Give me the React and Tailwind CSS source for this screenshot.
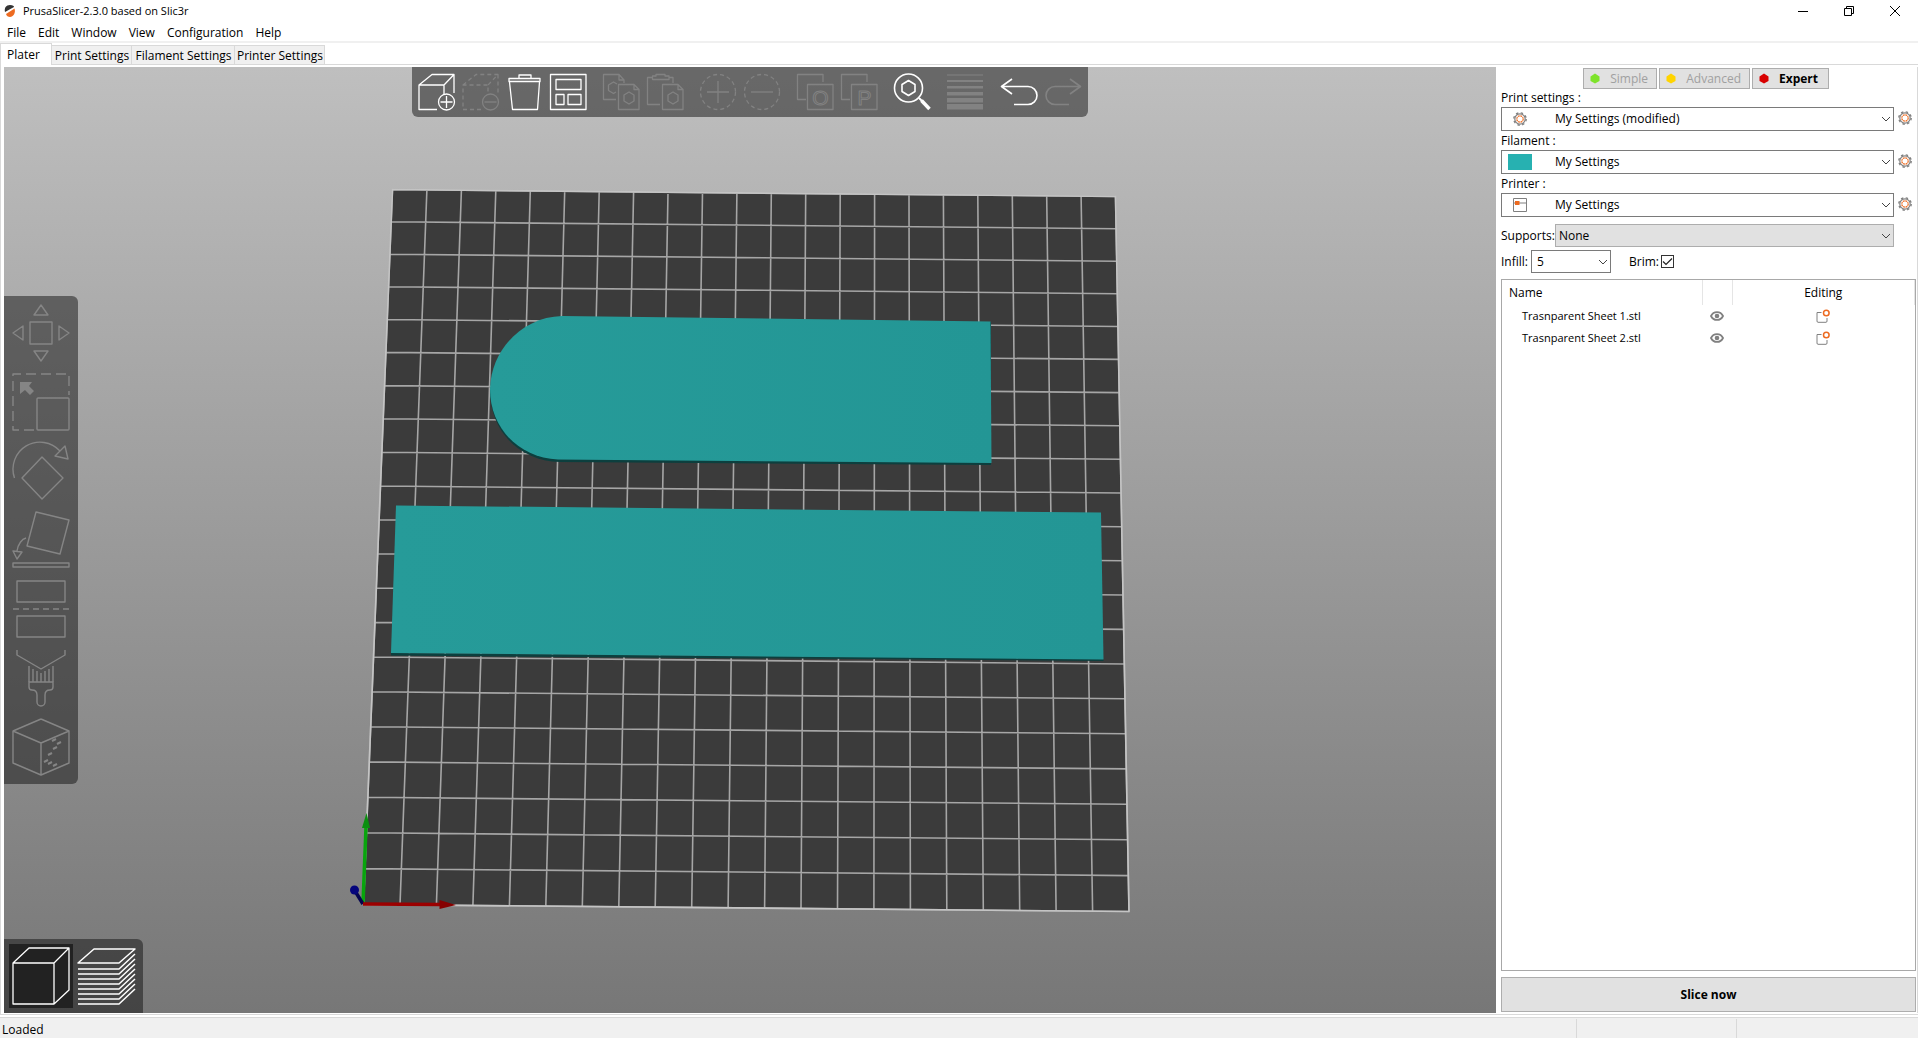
import React from "react";

/* ---------- 3D scene ---------- */

const BED = [
  [392.5, 189.5],
  [1115.5, 196.5],
  [1129, 911.5],
  [363.5, 904.5],
];
const CELLS = 21;

function makeProjection([[x0, y0], [x1, y1], [x2, y2], [x3, y3]]) {
  const dx1 = x1 - x2;
  const dx2 = x3 - x2;
  const dy1 = y1 - y2;
  const dy2 = y3 - y2;
  const sx = x0 - x1 + x2 - x3;
  const sy = y0 - y1 + y2 - y3;
  const den = dx1 * dy2 - dx2 * dy1;
  const g = (sx * dy2 - sy * dx2) / den;
  const h = (dx1 * sy - sx * dy1) / den;
  return (u, v) => {
    const w = g * u + h * v + 1;
    return [
      ((x1 - x0 + g * x1) * u + (x3 - x0 + h * x3) * v + x0) / w,
      ((y1 - y0 + g * y1) * u + (y3 - y0 + h * y3) * v + y0) / w,
    ].map((n) => n.toFixed(1));
  };
}

const project = makeProjection(BED);

const gridPath = Array.from({ length: CELLS + 1 }, (_, i) => {
  const t = i / CELLS;
  return `M${project(t, 0)}L${project(t, 1)}M${project(0, t)}L${project(1, t)}`;
}).join("");

function Scene() {
  return (
    <svg
      className="absolute inset-0 h-full w-full"
      viewBox="4 67 1492 946"
      preserveAspectRatio="xMidYMid slice"
      role="img"
      aria-label="Print bed with two sheets"
    >
      <defs>
        <linearGradient id="sheet" x1="0" x2="1">
          <stop offset="0" stopColor="#269b99" />
          <stop offset="1" stopColor="#239695" />
        </linearGradient>
      </defs>
      <polygon points={BED.join(" ")} fill="#3b3b3b" />
      <path d={gridPath} fill="none" stroke="#a6a6a6" strokeWidth="1.6" />
      <polygon points={BED.join(" ")} fill="none" stroke="#c4c4c4" strokeWidth="1.6" />

      <path
        d="M991 322V465L560 462C519 461 490 431 490 390Z"
        fill="#0c3f3e"
      />
      <path
        d="M562 316L990.500 321.500L991.500 463L558 459.500C519 458 490 428 490 389C491 349 523 317 562 316Z"
        fill="url(#sheet)"
      />
      <polygon points="391,653 1103.500,659 1103.500,661 391,655.500" fill="#0c3f3e" />
      <polygon points="396,505.500 1101,512.500 1103.500,659.500 391,653" fill="url(#sheet)" />

      <path d="M363 904L366 827" stroke="#07a50c" strokeWidth="3.500" />
      <path d="M362 828H370L366.500 813Z" fill="#0a8f0f" />
      <path d="M363 904L355 891" stroke="#050550" strokeWidth="3.500" />
      <circle cx="354.500" cy="890" r="4.500" fill="#05057c" />
      <path d="M363 904L441 904.500" stroke="#9b0000" strokeWidth="3.500" />
      <path d="M439.500 900V909L456 905Z" fill="#860000" />
    </svg>
  );
}

/* ---------- Icons ---------- */

function Icon({ size = "h-9 w-9", box = 36, width = 1.3, children }) {
  return (
    <svg
      className={`${size} shrink-0 overflow-visible`}
      viewBox={`0 0 ${box} ${box}`}
      fill="none"
      stroke="currentColor"
      strokeWidth={width}
      strokeLinejoin="round"
      aria-hidden="true"
    >
      {children}
    </svg>
  );
}

const FrontPage = () => (
  <>
    <path d="M15.500 10.500H31L36 15.500V35.500H15.500ZM31 10.500V15.500H36" />
    <path d="M26 18L31 21V27L26 30L21 27V21Z" />
  </>
);

const StackedSquares = ({ letter }) => (
  <>
    <path d="M9 25.500H.5V.5H26V8" />
    <path d="M10.500 10.500H36V35.500H10.500Z" />
    <text
      x="23.500"
      y="30.500"
      fontSize="21"
      strokeWidth="1"
      textAnchor="middle"
      fontFamily="Liberation Sans, sans-serif"
    >
      {letter}
    </text>
  </>
);

const TOOLBAR = [
  [
    {
      label: "Add",
      on: true,
      art: (
        <>
          <path d="M19 35.500H1V11H26V21M1 11L14 .5H36L26 11M36 .5V19" />
          <circle cx="28.500" cy="28" r="8" />
          <path d="M28.500 22V34M22.500 28H34.500" />
        </>
      ),
    },
    {
      label: "Delete",
      art: (
        <>
          <path d="M19 35.500H1V11H26V21M1 11L14 .5H36L26 11M36 .5V19" strokeDasharray="4 3" />
          <circle cx="28.500" cy="28" r="8" />
          <path d="M22.500 28H34.500" />
        </>
      ),
    },
    {
      label: "Delete all",
      on: true,
      art: (
        <>
          <path d="M3 4.500H34V7.500H3ZM13 4.500V1H25V4.500" />
          <path d="M3.500 8L6.500 35.500H31.500L33.500 8" />
        </>
      ),
    },
    {
      label: "Arrange",
      on: true,
      art: <path d="M.5 .5H36V35.500H.5ZM6 5.500H31V15.500H6ZM6 20.500H14V30.500H6ZM18 20.500H31V30.500H18Z" />,
    },
  ],
  [
    {
      label: "Copy",
      art: (
        <>
          <path d="M13 25.500H.5V.5H16L21 6V9M16 .5V6H21" />
          <path d="M13 18L10.500 19.500L5.500 16.500V11L10.500 8L14 10" />
          <FrontPage />
        </>
      ),
    },
    {
      label: "Paste",
      art: (
        <>
          <path d="M5.500 3.500H.5V30.500H13M22 3.500H26V9M5.500 5.500V2H9V.5H18V2H22V5.500Z" />
          <FrontPage />
        </>
      ),
    },
  ],
  [
    {
      label: "Add instance",
      art: (
        <>
          <circle cx="18" cy="18" r="17.500" strokeDasharray="4 3" />
          <path d="M18 7V29M7 18H29" />
        </>
      ),
    },
    {
      label: "Remove instance",
      art: (
        <>
          <circle cx="18" cy="18" r="17.500" strokeDasharray="4 3" />
          <path d="M7 18H29" />
        </>
      ),
    },
  ],
  [
    { label: "Split to objects", art: <StackedSquares letter="O" /> },
    { label: "Split to parts", art: <StackedSquares letter="P" /> },
  ],
  [
    {
      label: "Search",
      on: true,
      art: (
        <>
          <circle cx="14.500" cy="14" r="14" strokeWidth="1.600" />
          <path d="M14.500 6.500L21 10.500V17.500L14.500 21.500L8 17.500V10.500Z" strokeWidth="1.600" />
          <path d="M25 24L28 27" strokeWidth="2" />
          <path d="M27.500 26.500L35.500 35" strokeWidth="3.500" />
        </>
      ),
    },
  ],
  [
    {
      label: "Variable layer height",
      art: (
        <path
          d="M0 .5H36V1.500H0ZM0 6H36V8H0ZM0 12H36V14.500H0ZM0 18H36V21.500H0ZM0 24H36V28.500H0ZM0 30H36V35.500H0Z"
          fill="currentColor"
          stroke="none"
        />
      ),
    },
  ],
  [
    {
      label: "Undo",
      on: true,
      art: <path d="M12 5L1.500 12.500L12 20M1.500 12.500H28A9 9 0 0 1 28 30.500H14" strokeWidth="1.600" />,
    },
    {
      label: "Redo",
      art: <path d="M26 5L36.500 12.500L26 20M36.500 12.500H11A9 9 0 0 0 11 30.500H25" strokeWidth="1.600" />,
    },
  ],
];

const GIZMOS = [
  {
    label: "Move",
    art: <path d="M29 1L36 11H22ZM29 57L36 47H22ZM1 29L11 22V36ZM57 29L47 22V36ZM18 18H40V40H18Z" />,
  },
  {
    label: "Scale",
    art: (
      <>
        <path d="M22 57H1V1H57V22" strokeDasharray="10 5" />
        <rect x="25" y="25" width="32" height="32" rx="1" />
        <path d="M8 9H20L17 13L22 18L18 22L13 17L8 21Z" fill="currentColor" stroke="none" />
      </>
    ),
  },
  {
    label: "Rotate",
    art: <path d="M2.500 36A27 27 0 0 1 48 9M43 14L53 4L56 17ZM30 15L51 36L30 57L10 36Z" />,
  },
  {
    label: "Place on face",
    art: <path d="M24 1L57 9L48 43L15 35ZM14 27C10 28 6 33 5 40M1 40L10 41L5 48ZM1 52H57V56H1Z" />,
  },
  {
    label: "Cut",
    art: (
      <>
        <path d="M5 1H53V22H5ZM5 36H53V57H5Z" />
        <path d="M1 29H57" strokeDasharray="6 4" />
      </>
    ),
  },
  {
    label: "Paint supports",
    art: (
      <>
        <path d="M5 1V6L29 20L53 6V1" />
        <path d="M17 17V33M21 20V33M25 22V33M29 24V33M33 22V33M37 20V33M41 17V33" />
        <path d="M17 33H41V38Q41 41 38 41Q33 41 33 46V53A4 4 0 0 1 25 53V46Q25 41 20 41Q17 41 17 38Z" />
      </>
    ),
  },
  {
    label: "Seam painting",
    art: (
      <>
        <path d="M29 1L57 13V45L29 57L1 45V13L29 25L57 13M1 13L29 1M29 25V57" />
        <path
          d="M40 23L44 21M45 26L49 24M41 31L45 29M36 37L40 35M32 44L36 42M36 46L40 44M41 48L45 46"
          strokeWidth="2"
        />
      </>
    ),
  },
];

function Gear() {
  return (
    <svg className="h-3.5 w-3.5 shrink-0" viewBox="0 0 14 14" fill="none" aria-hidden="true">
      <circle cx="7" cy="7" r="5.200" stroke="#808080" strokeWidth="1.200" />
      <circle cx="7" cy="7" r="6.200" stroke="#808080" strokeWidth="1.400" strokeDasharray="2.400 2.470" />
      <circle cx="7" cy="7" r="3.200" stroke="#ed6b21" strokeWidth="1.200" strokeDasharray="1.900 .6" />
    </svg>
  );
}

const PrinterIcon = () => (
  <svg className="h-3.5 w-3.5" viewBox="0 0 14 14" fill="none" aria-hidden="true">
    <path d="M.5 .5H13.500V13.500H.5ZM.5 5H13.500" stroke="#808080" />
    <rect x="2" y="3" width="4.500" height="4" fill="#ed6b21" />
  </svg>
);

const Chevron = () => (
  <svg
    className="pointer-events-none absolute top-1/2 right-1 h-2 w-2 -translate-y-1/2"
    viewBox="0 0 8 8"
    fill="none"
    stroke="#444"
    aria-hidden="true"
  >
    <path d="M0 2L4 6L8 2" />
  </svg>
);

const Eye = () => (
  <svg className="h-2.5 w-3.5" viewBox="0 0 14 10" fill="none" stroke="#808080" aria-hidden="true">
    <path d="M1 5C3.500 -.2 10.500 -.2 13 5C10.500 10.200 3.500 10.200 1 5Z" strokeWidth="1.800" />
    <circle cx="7" cy="5" r="2.300" fill="#808080" stroke="none" />
  </svg>
);

const EditIcon = () => (
  <svg className="h-3.5 w-3.5" viewBox="0 0 14 14" fill="none" aria-hidden="true">
    <path d="M5.500 3.500H1V12Q1 13.300 2 13.300H10Q11 13.300 11 12V9" stroke="#808080" />
    <circle cx="10.300" cy="4" r="2.800" stroke="#ed6b21" strokeWidth="1.500" />
  </svg>
);

/* ---------- Window chrome ---------- */

function TitleBar() {
  return (
    <header className="flex h-[22px] items-center pl-1">
      <svg className="h-3 w-3" viewBox="0 0 12 12" aria-hidden="true">
        <path d="M1 7C0 3 2 0 6 0C9 0 10 1 10 2Z" fill="#333" />
        <path d="M2 9L10.500 3.500C12 8 9 12 6 12C4 12 2.500 11 2 9Z" fill="#ed6b21" />
      </svg>
      <h1 className="ml-[7px] flex-1 text-[11px]">PrusaSlicer-2.3.0 based on Slic3r</h1>
      <button aria-label="Minimize" className="flex h-5 w-[46px] items-center justify-center">
        <svg className="h-2.5 w-2.5" viewBox="0 0 10 10" stroke="#000">
          <path d="M0 5.500H10" />
        </svg>
      </button>
      <button aria-label="Restore" className="flex h-5 w-[46px] items-center justify-center">
        <svg className="h-2.5 w-2.5" viewBox="0 0 10 10" fill="none" stroke="#000">
          <path d="M.5 2.500H7.500V9.500H.5ZM2.500 2.500V.5H9.500V7.500H7.500" />
        </svg>
      </button>
      <button aria-label="Close" className="flex h-5 w-[46px] items-center justify-center">
        <svg className="h-2.5 w-2.5" viewBox="0 0 10 10" stroke="#000">
          <path d="M0 0L10 10M10 0L0 10" />
        </svg>
      </button>
    </header>
  );
}

function MenuBar() {
  return (
    <nav className="flex h-[21px] items-center gap-3 border-b-2 border-[#f0f0f0] pt-0.5 pl-[7px]">
      {["File", "Edit", "Window", "View", "Configuration", "Help"].map((item) => (
        <button key={item}>{item}</button>
      ))}
    </nav>
  );
}

const TABS = [
  ["Print Settings", "w-20"],
  ["Filament Settings", "w-[103px]"],
  ["Printer Settings", "w-[90px]"],
];

function Tabs() {
  return (
    <div role="tablist" className="flex h-[22px] items-end">
      <button
        role="tab"
        aria-selected="true"
        className="h-full w-[52px] border-x border-t border-[#d9d9d9] pl-1.5 text-left"
      >
        Plater
      </button>
      {TABS.map(([name, width]) => (
        <button
          key={name}
          role="tab"
          aria-selected="false"
          className={`${width} h-5 border-y border-r border-[#d9d9d9] bg-[#f0f0f0] pt-0.5 pl-px whitespace-nowrap`}
        >
          {name}
        </button>
      ))}
      <div className="h-px flex-1 bg-[#d9d9d9]" />
    </div>
  );
}

/* ---------- Viewport ---------- */

function Viewport() {
  return (
    <main className="relative grid min-w-0 flex-1 grid-rows-[1fr_auto_1fr] overflow-hidden bg-linear-to-b from-[#bfbfbf] to-[#777777]">
      <Scene />
      <div className="relative flex gap-[17px] self-start justify-self-center rounded-b-md bg-[#121212]/50 py-[7px] pr-2 pl-1.5">
        {TOOLBAR.map((group, i) => (
          <div key={i} className="flex gap-2">
            {group.map(({ label, on, art }) => (
              <button
                key={label}
                aria-label={label}
                disabled={!on}
                className={on ? "text-white" : "text-[#828282]"}
              >
                <Icon>{art}</Icon>
              </button>
            ))}
          </div>
        ))}
      </div>
      <div className="relative flex flex-col gap-[11px] justify-self-start rounded-r-md bg-[#121212]/50 p-2 text-[#858585]">
        {GIZMOS.map(({ label, art }) => (
          <button key={label} aria-label={label} disabled>
            <Icon size="h-[58px] w-[58px]" box={58} width={1.4}>
              {art}
            </Icon>
          </button>
        ))}
      </div>
      <div className="relative flex self-end justify-self-start rounded-tr-md bg-[#121212]/50 py-[5px] pr-1.5 pl-[5px] text-white">
        <button aria-label="3D editor view" className="bg-[#222]">
          <Icon size="h-16 w-16" box={64}>
            <path d="M4 19H45V60H4ZM4 19L20 4H60L45 19M60 4V46L45 60" />
          </Icon>
        </button>
        <button aria-label="Preview">
          <Icon size="h-16 w-16" box={64} width={1.5}>
            <path d="M5 19L21 5H62L46 19ZM5 25H46L62 10M5 30H46L62 15M5 35H46L62 20M5 40H46L62 25M5 45H46L62 30M5 50H46L62 35M5 55H46L62 40M5 60H46L62 45" />
          </Icon>
        </button>
      </div>
    </main>
  );
}

/* ---------- Side panel ---------- */

const MODES = [
  ["Simple", "#7ee32b", "w-[74px] pr-2 text-[#a0a0a0]"],
  ["Advanced", "#ffd400", "w-[91px] pr-2 text-[#a0a0a0]"],
  ["Expert", "#d80000", "w-[77px] pr-2.5 font-bold"],
];

function ModeButtons() {
  return (
    <div className="ml-[82px] flex gap-0.5">
      {MODES.map(([name, color, style]) => (
        <button
          key={name}
          className={`${style} flex h-[21px] items-center justify-between border border-[#adadad] bg-[#e1e1e1] pl-1.5`}
        >
          <svg className="h-3 w-2.5" viewBox="0 0 10 12" aria-hidden="true">
            <path d="M5 .5L9.500 3.500V8L5 10.500L.5 8V3.500Z" fill={color} />
          </svg>
          {name}
        </button>
      ))}
    </div>
  );
}

function Preset({ id, label, value, icon }) {
  return (
    <div>
      <label htmlFor={id} className="block h-[18px] leading-[18px]">
        {label}
      </label>
      <div className="flex h-[25px] items-start gap-1 pr-1">
        <div className="relative h-6 flex-1">
          <select
            id={id}
            className="h-full w-full appearance-none border border-[#7a7a7a] bg-white pl-[53px]"
          >
            <option>{value}</option>
          </select>
          <span className="pointer-events-none absolute inset-y-0 left-[7px] flex w-6 items-center justify-center">
            {icon}
          </span>
          <Chevron />
        </div>
        <button aria-label={`Edit ${label}`} className="pt-1">
          <Gear />
        </button>
      </div>
    </div>
  );
}

const OBJECTS = ["Trasnparent Sheet 1.stl", "Trasnparent Sheet 2.stl"];

function ObjectList() {
  return (
    <div className="mt-1.5 min-h-0 flex-1 border border-[#a8a8a8]">
      <table className="w-full table-fixed">
        <colgroup>
          <col className="w-[200px]" />
          <col className="w-[30px]" />
          <col />
        </colgroup>
        <thead>
          <tr className="h-[25px]">
            <th className="border-r border-[#e5e5e5] pl-[7px] text-left font-normal">Name</th>
            <th className="border-r border-[#e5e5e5]" aria-label="Visible" />
            <th className="border-r border-[#e5e5e5] font-normal">Editing</th>
          </tr>
        </thead>
        <tbody>
          {OBJECTS.map((name) => (
            <tr key={name} className="h-[22px]">
              <td className="pl-5 text-[11px] whitespace-nowrap">{name}</td>
              <td>
                <button aria-label={`Show ${name}`} className="mx-auto block">
                  <Eye />
                </button>
              </td>
              <td>
                <button aria-label={`Edit ${name}`} className="mx-auto block">
                  <EditIcon />
                </button>
              </td>
            </tr>
          ))}
        </tbody>
      </table>
    </div>
  );
}

function SidePanel() {
  return (
    <aside className="flex w-[422px] shrink-0 flex-col border-r border-[#d9d9d9] pt-px pr-px pl-[5px]">
      <ModeButtons />
      <Preset id="print" label="Print settings :" value="My Settings (modified)" icon={<Gear />} />
      <Preset
        id="filament"
        label="Filament :"
        value="My Settings"
        icon={<span className="h-4 w-6 bg-[#27b1b1]" />}
      />
      <Preset id="printer" label="Printer :" value="My Settings" icon={<PrinterIcon />} />
      <div className="mt-1.5 mr-[22px] flex h-[23px] items-center">
        <label htmlFor="supports" className="w-[54px] whitespace-nowrap">
          Supports:
        </label>
        <div className="relative h-full flex-1">
          <select
            id="supports"
            className="h-full w-full appearance-none border border-[#adadad] bg-[#e1e1e1] pl-[3px]"
          >
            <option>None</option>
          </select>
          <Chevron />
        </div>
      </div>
      <div className="mt-[3px] flex h-[23px] items-center">
        <label htmlFor="infill" className="w-[30px]">
          Infill:
        </label>
        <div className="relative h-full w-20">
          <input
            id="infill"
            defaultValue="5"
            className="h-full w-full border border-[#7a7a7a] bg-white pl-[5px]"
          />
          <Chevron />
        </div>
        <label htmlFor="brim" className="ml-[18px] w-8">
          Brim:
        </label>
        <span className="relative h-[13px] w-[13px]">
          <input
            id="brim"
            type="checkbox"
            defaultChecked
            className="block h-[13px] w-[13px] appearance-none border border-[#333] bg-white"
          />
          <svg
            className="pointer-events-none absolute inset-0"
            viewBox="0 0 13 13"
            fill="none"
            stroke="#222"
            strokeWidth="1.200"
            aria-hidden="true"
          >
            <path d="M2 6.500L5 9.500L11 3.500" />
          </svg>
        </span>
      </div>
      <ObjectList />
      <button className="mt-1.5 mb-px h-[35px] border border-[#adadad] bg-[#e1e1e1] font-bold">
        Slice now
      </button>
    </aside>
  );
}

export default function App() {
  return (
    <div className="flex h-screen flex-col overflow-hidden bg-white font-['Open_Sans',sans-serif] text-xs leading-4 text-black">
      <TitleBar />
      <MenuBar />
      <Tabs />
      <div className="flex min-h-0 flex-1 border-b border-l border-[#d9d9d9] pt-0.5 pb-px pl-[3px]">
        <Viewport />
        <SidePanel />
      </div>
      <footer className="mt-0.5 flex h-[21px] border-t border-[#d9d9d9] bg-[#f0f0f0]">
        <span className="flex-1 pt-1 pl-0.5 leading-4">Loaded</span>
        <span className="mt-px w-40 border-l border-[#d9d9d9]" />
        <span className="mt-px w-[182px] border-l border-[#d9d9d9]" />
      </footer>
    </div>
  );
}
